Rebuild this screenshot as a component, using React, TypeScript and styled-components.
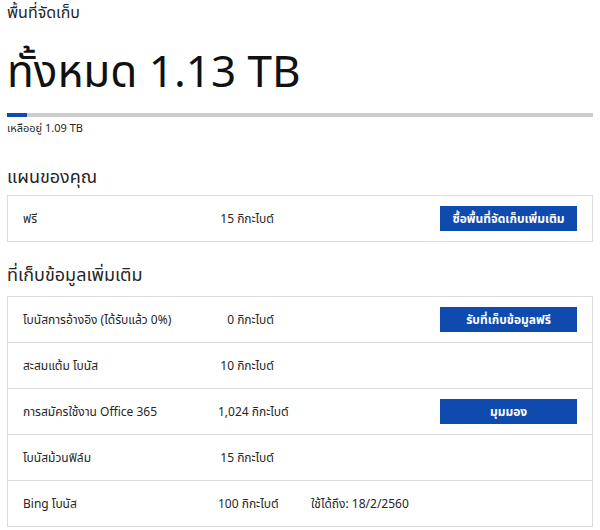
import React from 'react';
import styled, { createGlobalStyle } from 'styled-components';

const GlobalStyle = createGlobalStyle`
  body {
    margin: 0;
    background: #ffffff;
    font-family: 'Segoe UI', 'Noto Sans', 'Noto Sans Thai', 'DejaVu Sans', sans-serif;
    color: #262626;
  }
`;

const Page = styled.div`
  padding: 1px 7px 0 7px;
  width: 586px;
`;

const Caption = styled.div`
  font-size: 16px;
  line-height: 22px;
`;

const Total = styled.div`
  font-size: 44px;
  line-height: 60px;
  margin-top: 17px;
  color: #111;
`;

const Track = styled.div`
  height: 4px;
  background: #cccccc;
  margin-top: 13px;
  display: flex;
`;

const Fill = styled.div`
  background: #0f4ba8;
  height: 100%;
`;

const Remain = styled.div`
  font-size: 11px;
  margin-top: 4px;
  line-height: 14px;
`;

const SectionTitle = styled.div<{ $top: number; $bottom: number }>`
  font-size: 18px;
  line-height: 24px;
  margin-top: ${(p) => p.$top}px;
  margin-bottom: ${(p) => p.$bottom}px;
`;

const Box = styled.div`
  border: 1px solid #dcdcdc;
`;

const Row = styled.div`
  display: grid;
  grid-template-columns: 195px 56px 1fr 137px;
  align-items: center;
  height: 45px;
  padding: 0 15px;
  font-size: 12px;
  border-bottom: 1px solid #dcdcdc;
  &:last-child {
    border-bottom: none;
  }
`;

const Label = styled.div`
  white-space: nowrap;
`;

const Amount = styled.div`
  text-align: right;
  white-space: nowrap;
`;

const Note = styled.div`
  padding-left: 37px;
  white-space: nowrap;
`;

const Button = styled.button`
  height: 25px;
  background: #0f4bae;
  border: none;
  color: #ffffff;
  font-family: inherit;
  font-weight: bold;
  font-size: 12px;
  padding: 0;
  cursor: pointer;
`;

type Item = { label: string; amount: string; note?: string; action?: string };

const plan: Item[] = [{ label: 'ฟรี', amount: '15 กิกะไบต์', action: 'ซื้อพื้นที่จัดเก็บเพิ่มเติม' }];

const extra: Item[] = [
  { label: 'โบนัสการอ้างอิง (ได้รับแล้ว 0%)', amount: '0 กิกะไบต์', action: 'รับที่เก็บข้อมูลฟรี' },
  { label: 'สะสมแต้ม โบนัส', amount: '10 กิกะไบต์' },
  { label: 'การสมัครใช้งาน Office 365', amount: '1,024 กิกะไบต์', action: 'มุมมอง' },
  { label: 'โบนัสม้วนฟิล์ม', amount: '15 กิกะไบต์' },
  { label: 'Bing โบนัส', amount: '100 กิกะไบต์', note: 'ใช้ได้ถึง: 18/2/2560' },
];

const Rows = ({ items }: { items: Item[] }) => (
  <Box>
    {items.map((it) => (
      <Row key={it.label}>
        <Label>{it.label}</Label>
        <Amount>{it.amount}</Amount>
        <Note>{it.note}</Note>
        {it.action ? <Button>{it.action}</Button> : <span />}
      </Row>
    ))}
  </Box>
);

const App = () => {
  const used = 20 / 586;
  return (
    <Page>
      <GlobalStyle />
      <Caption>พื้นที่จัดเก็บ</Caption>
      <Total>ทั้งหมด 1.13 TB</Total>
      <Track>
        <Fill style={{ width: `${used * 100}%` }} />
      </Track>
      <Remain>เหลืออยู่ 1.09 TB</Remain>
      <SectionTitle $top={29} $bottom={7}>แผนของคุณ</SectionTitle>
      <Rows items={plan} />
      <SectionTitle $top={20} $bottom={10}>ที่เก็บข้อมูลเพิ่มเติม</SectionTitle>
      <Rows items={extra} />
    </Page>
  );
};

export default App;
